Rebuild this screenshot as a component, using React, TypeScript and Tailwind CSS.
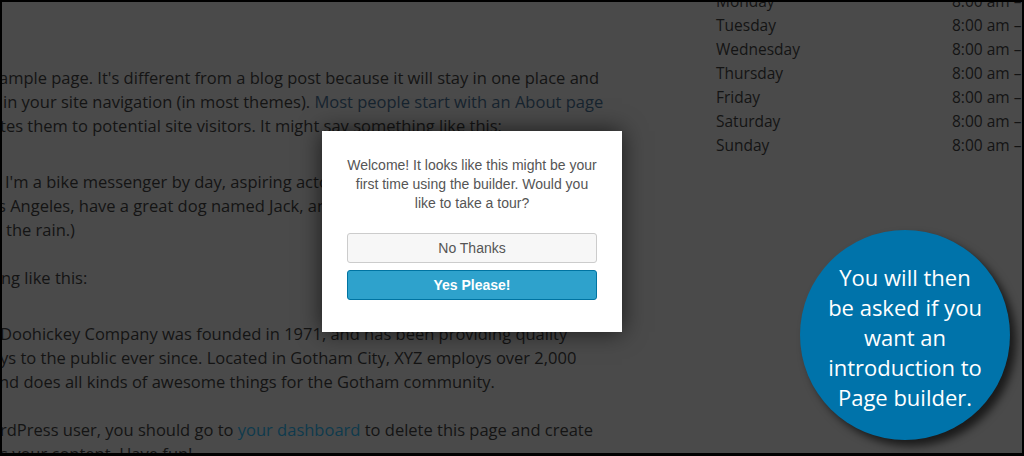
const hours = ['Monday', 'Tuesday', 'Wednesday', 'Thursday', 'Friday', 'Saturday', 'Sunday']

const link = 'text-[#0f3a4d]'

export default function App() {
  return (
    <div className="w-[1024px] h-[456px] bg-black pt-[2px] pl-[2px] pr-[2px] pb-[3px]">
      <div className="relative h-full overflow-hidden bg-[#4a4a4a] flex text-[#141414] font-['Open_Sans',sans-serif]">
        {/* page content, cropped at the left */}
        <div className="w-[714px] shrink-0 pt-[64px] text-[16.5px] leading-[24px] whitespace-nowrap">
          <p className="-ml-[3px]">ample page. It's different from a blog post because it will stay in one place and</p>
          <p className="ml-[1px]">
            in your site navigation (in most themes). <span className="text-[#17242f]">Most people start with an About page</span>
          </p>
          <p className="-ml-[2px]">tes them to potential site visitors. It might say something like this:</p>

          <blockquote className="mt-[32px]">
            <p className="ml-[3px]">I'm a bike messenger by day, aspiring actor by night, and this is my website.</p>
            <p className="-ml-[4px]">s Angeles, have a great dog named Jack, and I like piña coladas.</p>
            <p className="ml-[4px]">the rain.)</p>
          </blockquote>

          <p className="mt-[24px] -ml-[1px]">ng like this:</p>

          <div className="mt-[32px]">
            <p className="-ml-[2px]">Doohickey Company was founded in 1971, and has been providing quality</p>
            <p className="-ml-[2px]">ys to the public ever since. Located in Gotham City, XYZ employs over 2,000</p>
            <p className="-ml-[3px]">nd does all kinds of awesome things for the Gotham community.</p>
          </div>

          <div className="mt-[24px]">
            <p className="-ml-[2px]">
              rdPress user, you should go to <span className={link}>your dashboard</span> to delete this page and create
            </p>
            <p className="-ml-[2px]">s your content. Have fun!</p>
          </div>
        </div>

        {/* opening hours widget */}
        <div className="flex-1 -mt-[13px] text-[15.5px] leading-[24px] whitespace-nowrap">
          {hours.map((day) => (
            <div key={day} className="flex">
              <span className="w-[236px]">{day}</span>
              <span>8:00 am – 5:00 pm</span>
            </div>
          ))}
        </div>

        {/* tour dialog */}
        <div className="absolute left-[320px] top-[129px] w-[300px] h-[201px] bg-white shadow-[0_0_22px_rgba(0,0,0,0.65)] px-[25px] pt-[25px] font-['Liberation_Sans',Arial,sans-serif]">
          <p className="text-[14px] leading-[19px] text-[#555] text-center">
            Welcome! It looks like this might be your first time using the builder. Would you like to take a tour?
          </p>
          <div className="mt-[20px] flex flex-col gap-[7px]">
            <button className="h-[30px] w-full rounded-[3px] border border-[#ccc] bg-[#f7f7f7] text-[14px] text-[#555]">
              No Thanks
            </button>
            <button className="h-[30px] w-full rounded-[3px] border border-[#0074a2] bg-[#2ea2cc] text-[14px] font-bold text-white">
              Yes Please!
            </button>
          </div>
        </div>

        {/* callout bubble */}
        <div className="absolute left-[798px] top-[228px] w-[210px] h-[210px] rounded-full bg-[#0073aa] shadow-[6px_6px_8px_rgba(0,0,0,0.65)] flex flex-col items-center justify-center pt-[4px] text-white text-center text-[22px] leading-[30px] font-['Open_Sans',sans-serif]">
          <span>You will then</span>
          <span>be asked if you</span>
          <span>want an</span>
          <span>introduction to</span>
          <span>Page builder.</span>
        </div>
      </div>
    </div>
  )
}
